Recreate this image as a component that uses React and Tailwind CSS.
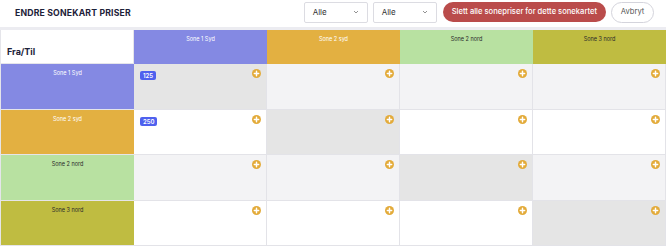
import React from 'react';

const zones = [
  { name: 'Sone 1 Syd', bg: 'bg-[#8489e3]', text: 'text-white' },
  { name: 'Sone 2 syd', bg: 'bg-[#e3b041]', text: 'text-white' },
  { name: 'Sone 2 nord', bg: 'bg-[#b8e1a1]', text: 'text-[#2a2a2a]' },
  { name: 'Sone 3 nord', bg: 'bg-[#bfbc41]', text: 'text-[#2a2a2a]' },
];

const prices = {
  '0-0': 125,
  '1-0': 250,
};

function PlusIcon() {
  return (
    <svg width="9" height="9" viewBox="0 0 10 10" className="absolute right-[5px] top-[5px]">
      <circle cx="5" cy="5" r="5" fill="#e3ab3a" />
      <path d="M5 2.6v4.8M2.6 5h4.8" stroke="#fff" strokeWidth="1.6" strokeLinecap="round" />
    </svg>
  );
}

function Select() {
  return (
    <div className="w-[64px] h-[21px] border border-[#dcdce2] rounded-[2px] bg-white flex items-center justify-between px-[8px] text-[8px] text-[#333]">
      <span>Alle</span>
      <svg width="6" height="4" viewBox="0 0 6 4">
        <path d="M1 1l2 2 2-2" stroke="#777" strokeWidth="0.8" fill="none" />
      </svg>
    </div>
  );
}

export default function App() {
  return (
    <div className="w-[666px] h-[248px] bg-white overflow-hidden" style={{ fontFamily: 'Inter, "Noto Sans", sans-serif' }}>
      <header className="h-[30px] flex items-center pl-[15px] pr-[12px] border-b-[3px] border-[#ececf1]">
        <h1 className="text-[8.7px] font-bold text-[#1c2138] tracking-[0.02em] flex-1">ENDRE SONEKART PRISER</h1>
        <div className="flex items-center gap-[5px] -mt-[3px]">
          <Select />
          <Select />
          <button className="ml-[1px] h-[20px] px-[9px] rounded-full bg-[#ba4c4b] text-white text-[7.6px] font-medium">
            Slett alle sonepriser for dette sonekartet
          </button>
          <button className="h-[21px] w-[43px] rounded-full border border-[#d4d4dc] bg-white text-[#555] text-[7.6px]">
            Avbryt
          </button>
        </div>
      </header>

      <div className="grid grid-cols-5 grid-rows-[34px_repeat(4,45.5px)] border-l border-[#e5e5ea]">
        <div className="border-r border-b border-[#e5e5ea] flex items-end pl-[6px] pb-[5px]">
          <span className="text-[9px] font-bold text-[#1c2138]">Fra/Til</span>
        </div>
        {zones.map((z) => (
          <div key={z.name} className={`${z.bg} ${z.text} text-[5.5px] text-center pt-[5px]`}>
            {z.name}
          </div>
        ))}

        {zones.map((row, r) => (
          <React.Fragment key={row.name}>
            <div className={`${row.bg} ${row.text} text-[5.5px] text-center pt-[5px] border-b border-[#e5e5ea]`}>
              {row.name}
            </div>
            {zones.map((col, c) => {
              const diag = r === c;
              const bg = diag ? 'bg-[#e5e5e5]' : r % 2 === 0 ? 'bg-[#f3f3f5]' : 'bg-white';
              const price = prices[`${r}-${c}`];
              return (
                <div key={col.name} className={`relative ${bg} border-r border-b border-[#e3e3e8]`}>
                  {price && (
                    <span className="absolute left-[6px] top-[7px] bg-[#4f61ee] text-white text-[6px] font-semibold rounded-[2px] px-[3px] leading-[9px]">
                      {price}
                    </span>
                  )}
                  <PlusIcon />
                </div>
              );
            })}
          </React.Fragment>
        ))}
      </div>
    </div>
  );
}
